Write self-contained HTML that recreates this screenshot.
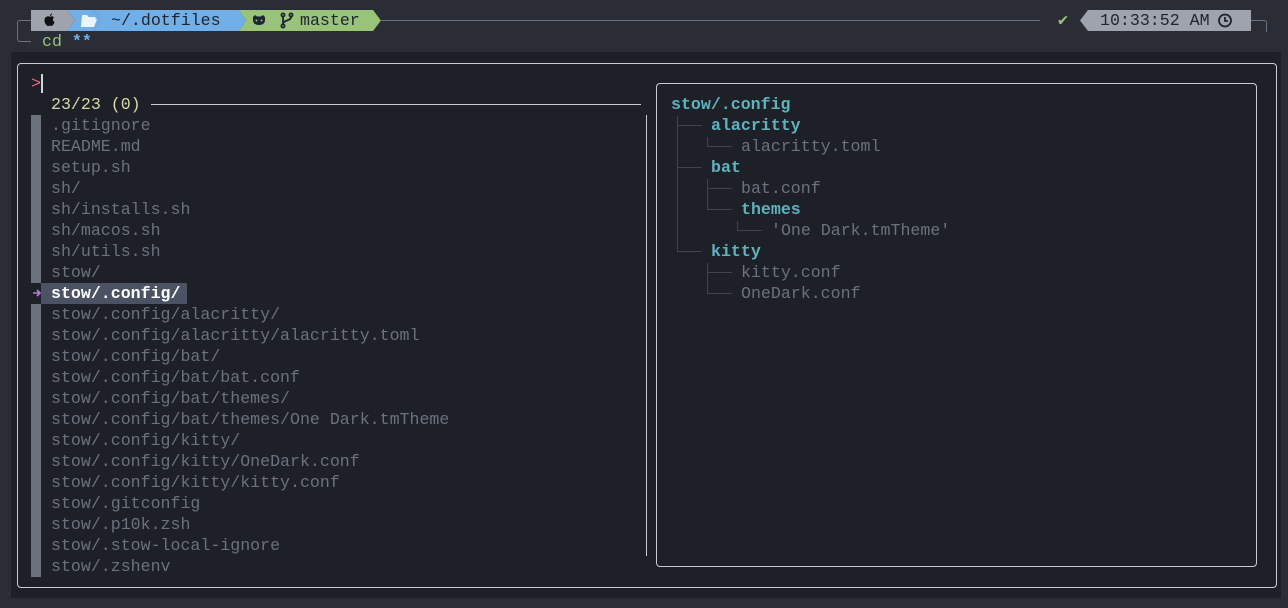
<!DOCTYPE html>
<html><head><meta charset="utf-8"><style>
*{margin:0;padding:0;box-sizing:border-box}
body{width:1288px;height:608px;overflow:hidden;background:#2a2d35;font-family:"Liberation Mono","DejaVu Sans Mono",monospace;font-size:16.6px;position:relative}
.t{position:absolute;white-space:pre;line-height:21px;height:21px}
.g{color:#6b717d}
.c{color:#5fb3bf;font-weight:bold}
.ln{position:absolute;background:#3e434d}
</style></head><body>
<!-- prompt bar -->
<svg style="position:absolute;left:31px;top:10px" width="360" height="21">
<polygon points="36,0 62,0 70,10.5 62,21 36,21 44,10.5" fill="#71afe8"/>
<polygon points="0,0 36,0 44,10.5 36,21 0,21" fill="#9ea3ad"/>
<polygon points="208,0 342,0 350,10.5 342,21 208,21 215,10.5" fill="#98c379"/>
<polygon points="62,0 208,0 215,10.5 208,21 62,21 70,10.5" fill="#71afe8"/>
<!-- apple -->
<path d="M15 7c1.5-1 3-1 4 0 1-1 2.5-1 4 0.5-1.5 1-1.5 3.5 0.5 4.5-0.5 2-2 4-3 4s-1.5-0.5-1.5-0.5-1 0.5-2 0.5c-1.5 0-3.5-3-3.5-5.5 0-2 0.5-3 1.5-3.5z M19 6c0-1.5 1-2.5 2-2.5 0 1.5-1 2.5-2 2.5z" fill="#111"/>
<!-- folder -->
<path d="M51 5h5l1.5 2h7v2h-11l-3 8h-0.5z M53 9h13l-3 8h-13z" fill="#eef4fb"/>
<!-- github cat -->
<path d="M222 7l2-2 2 1.5h4l2-1.5 2 2v3c0 3-2 5-6 5s-6-2-6-5z" fill="#1e2530"/>
<circle cx="225.5" cy="10.5" r="1" fill="#98c379"/><circle cx="230.5" cy="10.5" r="1" fill="#98c379"/>
<!-- branch -->
<g stroke="#1e2530" stroke-width="1.8" fill="none"><circle cx="252" cy="5" r="1.6"/><circle cx="252" cy="16" r="1.6"/><circle cx="260" cy="5" r="1.6"/><path d="M252 7v7M260 7c0 4-8 3-8 7"/></g>
</svg>
<div class="t" style="left:111px;top:10px;color:#1e2530">~/.dotfiles</div>
<div class="t" style="left:300px;top:10px;color:#1e2530">master</div>
<div style="position:absolute;left:380px;top:20px;width:660px;height:1px;background:#6b717d"></div>
<div style="position:absolute;left:17px;top:20px;width:14px;height:22px;border:1px solid #6b717d;border-right:none;border-radius:3px 0 0 3px"></div>
<div class="t" style="left:42px;top:31px;color:#98c379">cd <span style="color:#71afe8;font-weight:bold">**</span></div>
<div class="t" style="left:1058px;top:10px;color:#98c379;font-weight:bold">✔</div>
<svg style="position:absolute;left:1080px;top:10px" width="172" height="21"><polygon points="8,0 171,0 171,21 8,21 0,10.5" fill="#9ea3ad"/>
<g stroke="#1e2530" stroke-width="1.8" fill="none"><circle cx="145" cy="10.5" r="6"/><path d="M145 7v4h3"/></g></svg>
<div class="t" style="left:1100px;top:10px;color:#1e2530">10:33:52 AM</div>
<div style="position:absolute;left:1251px;top:20px;width:16px;height:12px;border:1px solid #6b717d;border-left:none;border-bottom:none;border-radius:0 3px 0 0"></div>
<!-- terminal -->
<div style="position:absolute;left:11px;top:52px;width:1270px;height:546px;background:#1e2028"></div>
<div style="position:absolute;left:17px;top:63px;width:1260px;height:525px;border:1px solid #c8ccd4;border-radius:4px"></div>
<div style="position:absolute;left:656px;top:83px;width:601px;height:484px;border:1px solid #c8ccd4;border-radius:4px"></div>
<div class="t" style="left:31px;top:73px;color:#e06c75">&gt;</div>
<div style="position:absolute;left:41px;top:74px;width:2px;height:19px;background:#d0d4da"></div>
<div class="t" style="left:51px;top:94px;color:#d8d8a8">23/23 (0)</div>
<div style="position:absolute;left:151px;top:104px;width:490px;height:1px;background:#c8ccd4"></div>
<div style="position:absolute;left:646px;top:115px;width:1px;height:441px;background:#c8ccd4"></div>
<div style="position:absolute;left:31px;top:115px;width:10px;height:462px;background:#6b717d"></div>
<div style="position:absolute;left:31px;top:283px;width:10px;height:21px;background:#1e2028"></div>
<div style="position:absolute;left:41px;top:283px;width:146px;height:21px;background:#4b5263"></div>
<svg style="position:absolute;left:32px;top:287px" width="10" height="12"><path d="M1 6h7M5 3l3 3-3 3" stroke="#c678dd" stroke-width="1.6" fill="none"/></svg>
<div class="t g" style="left:51px;top:115px">.gitignore
README.md
setup.sh
sh/
sh/installs.sh
sh/macos.sh
sh/utils.sh
stow/
<b style="color:#fff">stow/.config/</b>
stow/.config/alacritty/
stow/.config/alacritty/alacritty.toml
stow/.config/bat/
stow/.config/bat/bat.conf
stow/.config/bat/themes/
stow/.config/bat/themes/One Dark.tmTheme
stow/.config/kitty/
stow/.config/kitty/OneDark.conf
stow/.config/kitty/kitty.conf
stow/.gitconfig
stow/.p10k.zsh
stow/.stow-local-ignore
stow/.zshenv</div>
<!-- tree -->
<div class="t c" style="left:671px;top:94px">stow/.config</div>
<div class="t c" style="left:711px;top:115px">alacritty</div>
<div class="t g" style="left:741px;top:136px">alacritty.toml</div>
<div class="t c" style="left:711px;top:157px">bat</div>
<div class="t g" style="left:741px;top:178px">bat.conf</div>
<div class="t c" style="left:741px;top:199px">themes</div>
<div class="t g" style="left:771px;top:220px">'One Dark.tmTheme'</div>
<div class="t c" style="left:711px;top:241px">kitty</div>
<div class="t g" style="left:741px;top:262px">kitty.conf</div>
<div class="t g" style="left:741px;top:283px">OneDark.conf</div>
<div class="ln" style="left:677px;top:116px;width:1px;height:135px"></div>
<div class="ln" style="left:677px;top:125px;width:25px;height:1px"></div>
<div class="ln" style="left:677px;top:167px;width:25px;height:1px"></div>
<div class="ln" style="left:677px;top:251px;width:25px;height:1px"></div>
<div class="ln" style="left:707px;top:137px;width:1px;height:9px"></div>
<div class="ln" style="left:707px;top:146px;width:25px;height:1px"></div>
<div class="ln" style="left:707px;top:179px;width:1px;height:30px"></div>
<div class="ln" style="left:707px;top:188px;width:25px;height:1px"></div>
<div class="ln" style="left:707px;top:209px;width:25px;height:1px"></div>
<div class="ln" style="left:737px;top:221px;width:1px;height:9px"></div>
<div class="ln" style="left:737px;top:230px;width:25px;height:1px"></div>
<div class="ln" style="left:707px;top:263px;width:1px;height:30px"></div>
<div class="ln" style="left:707px;top:272px;width:25px;height:1px"></div>
<div class="ln" style="left:707px;top:293px;width:25px;height:1px"></div>
</body></html>
